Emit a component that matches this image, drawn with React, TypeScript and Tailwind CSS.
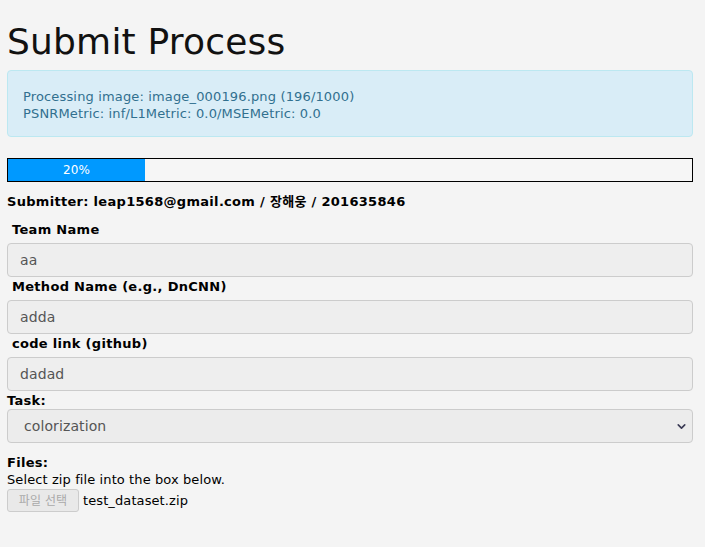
import { ChevronDown } from "lucide-react";

const FIELDS = [
  { label: "Team Name", value: "aa" },
  { label: "Method Name (e.g., DnCNN)", value: "adda" },
  { label: "code link (github)", value: "dadad" },
];

export default function App() {
  const progress = 20;

  return (
    <div className="min-h-[547px] bg-[#f4f4f4] px-[7px] pt-[22px] text-[13px] tracking-[0.1px] text-black [font-family:'DejaVu_Sans','Noto_Sans_CJK_KR',sans-serif]">
      <h1 className="text-[36px] leading-[40px] tracking-[0.2px] text-[#111]">Submit Process</h1>

      {/* status */}
      <div className="mt-[8px] h-[67px] w-[686px] rounded border border-[#bce8f1] bg-[#d9edf7] px-[15px] pt-[17px] text-[13px] leading-[17px] tracking-[0.15px] text-[#31708f]">
        <div>Processing image: image_000196.png (196/1000)</div>
        <div>PSNRMetric: inf/L1Metric: 0.0/MSEMetric: 0.0</div>
      </div>

      {/* progress */}
      <div className="mt-[21px] flex h-[24px] w-[686px] border border-black bg-[#f6f6f6]">
        <div
          className="flex items-center justify-center bg-[#0099ff] text-[12px] text-white"
          style={{ width: `${progress}%` }}
        >
          {progress}%
        </div>
      </div>

      <div className="mt-[11px] font-bold leading-[17px] tracking-[0.3px]">
        Submitter: leap1568@gmail.com / 장해웅 / 201635846
      </div>

      <div className="mt-[10px] flex w-[686px] flex-col">
        {FIELDS.map((f) => (
          <div key={f.label} className="flex flex-col">
            <label className="pl-[5px] pt-[1px] font-bold leading-[17px] tracking-[0.3px]">{f.label}</label>
            <div className="mt-[5px] flex h-[34px] items-center rounded border border-[#ccc] bg-[#eeeeee] px-[12px] text-[14px] text-[#555]">
              {f.value}
            </div>
          </div>
        ))}
      </div>

      <div className="mt-[1px] font-bold leading-[17px] tracking-[0.3px]">Task:</div>
      <div className="flex h-[34px] w-[686px] items-center justify-between rounded border border-[#ccc] bg-[#ececec] pl-[16px] pr-[4px] text-[14px] text-[#555]">
        <span>colorization</span>
        <ChevronDown className="h-[13px] w-[13px] text-[#3b3b55]" strokeWidth={3} />
      </div>

      <div className="mt-[11px] font-bold leading-[17px] tracking-[0.3px]">Files:</div>
      <div className="leading-[17px]">Select zip file into the box below.</div>
      <div className="mt-[1px] flex items-center gap-[4px]">
        <div className="flex h-[23px] w-[72px] items-center justify-center rounded-[3px] border border-[#ccc] bg-[#e9e9e9] text-[12px] text-[#aaa]">
          파일 선택
        </div>
        <span>test_dataset.zip</span>
      </div>
    </div>
  );
}
